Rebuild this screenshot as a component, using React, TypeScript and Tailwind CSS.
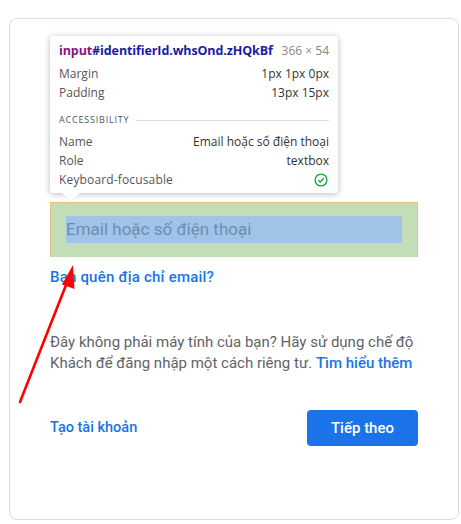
import React from "react";

export default function App() {
  return (
    <div className="relative w-[461px] h-[524px] bg-white overflow-hidden" style={{ fontFamily: "Roboto, 'Liberation Sans', sans-serif" }}>
      <div className="absolute left-[9px] top-[18px] w-[450px] h-[502px] border border-[#dadce0] rounded-[8px] bg-white">
        <div className="flex flex-col pl-[40px] pr-[40px] pt-[183px]">
          <div className="h-[55px] w-[368px] bg-[#c3deb7] border-t border-l border-r border-[#f6b26b]/70 pt-[13px] pl-[15px] pr-[15px] pb-[13px]">
            <div className="h-[27px] bg-[#9fc4e7] flex items-center text-[17px] text-[#6d8db3]">Email hoặc số điện thoại</div>
          </div>
          <div className="mt-[10px] h-[20px] leading-[20px] text-[15px] font-medium text-[#1a73e8] tracking-[0.2px]">Bạn quên địa chỉ email?</div>
          <div className="mt-[45px] text-[15px] leading-[21px] text-[#5f6368]">
            Đây không phải máy tính của bạn? Hãy sử dụng chế độ Khách để đăng nhập một cách riêng tư.{" "}
            <span className="font-medium text-[#1a73e8]">Tìm hiểu thêm</span>
          </div>
          <div className="mt-[36px] flex items-center justify-between">
            <span className="text-[14.5px] font-medium text-[#1a73e8]">Tạo tài khoản</span>
            <button className="w-[111px] h-[36px] rounded-[4px] bg-[#1a73e8] text-white text-[15px] font-medium">Tiếp theo</button>
          </div>
        </div>
      </div>

      {/* DevTools tooltip */}
      <div
        className="absolute left-[50px] top-[36px] w-[288px] h-[157px] bg-white rounded-[3px] shadow-[0_1px_6px_rgba(0,0,0,0.28)] px-[9px] pt-[5px] text-[12px]"
        style={{ fontFamily: "'Open Sans', 'Noto Sans', sans-serif" }}
      >
        <div className="flex justify-between items-center h-[20px]">
          <span className="font-bold text-[12.5px] tracking-[-0.1px]">
            <span className="text-[#881280]">input</span>
            <span className="text-[#1a1aa6]">#identifierId.whsOnd.zHQkBf</span>
          </span>
          <span className="text-[#888]">366 × 54</span>
        </div>
        <div className="flex justify-between items-center h-[19px] mt-[3px] text-[#555]">
          <span>Margin</span>
          <span className="text-[#333]">1px 1px 0px</span>
        </div>
        <div className="flex justify-between items-center h-[19px] text-[#555]">
          <span>Padding</span>
          <span className="text-[#333]">13px 15px</span>
        </div>
        <div className="flex items-center h-[20px] mt-[8px] gap-[7px]">
          <span className="text-[9px] tracking-[0.8px] text-[#555]">ACCESSIBILITY</span>
          <div className="flex-1 h-px bg-[#ddd]"></div>
        </div>
        <div className="flex justify-between items-center h-[19px] mt-[2px] text-[#555]">
          <span>Name</span>
          <span className="text-[#333]">Email hoặc số điện thoại</span>
        </div>
        <div className="flex justify-between items-center h-[19px] text-[#555]">
          <span>Role</span>
          <span className="text-[#333]">textbox</span>
        </div>
        <div className="flex justify-between items-center h-[19px] text-[#555]">
          <span className="tracking-[0.15px]">Keyboard-focusable</span>
          <svg width="14" height="14" viewBox="0 0 14 14" className="mr-[1px]">
            <circle cx="7" cy="7" r="5.9" fill="none" stroke="#0ca33b" strokeWidth="1.3" />
            <path d="M4.3 7.2 L6.2 9 L9.8 5.3" fill="none" stroke="#0ca33b" strokeWidth="1.3" />
          </svg>
        </div>
      </div>
      {/* tooltip pointer */}
      <svg className="absolute left-[60px] top-[192px]" width="22" height="10" viewBox="0 0 22 10">
        <path d="M0 0 L11 9 L22 0 Z" fill="white" />
        <path d="M1 1 L11 9 L21 1" fill="none" stroke="rgba(0,0,0,0.06)" strokeWidth="1" />
      </svg>

      {/* red annotation arrow */}
      <svg className="absolute left-0 top-0 pointer-events-none" width="461" height="524" viewBox="0 0 461 524">
        <line x1="20" y1="402" x2="68" y2="280" stroke="#ff0000" strokeWidth="2.6" strokeLinecap="round" />
        <path d="M73 265 L74.5 289 L62 284.5 Z" fill="#ff0000" />
      </svg>
    </div>
  );
}
